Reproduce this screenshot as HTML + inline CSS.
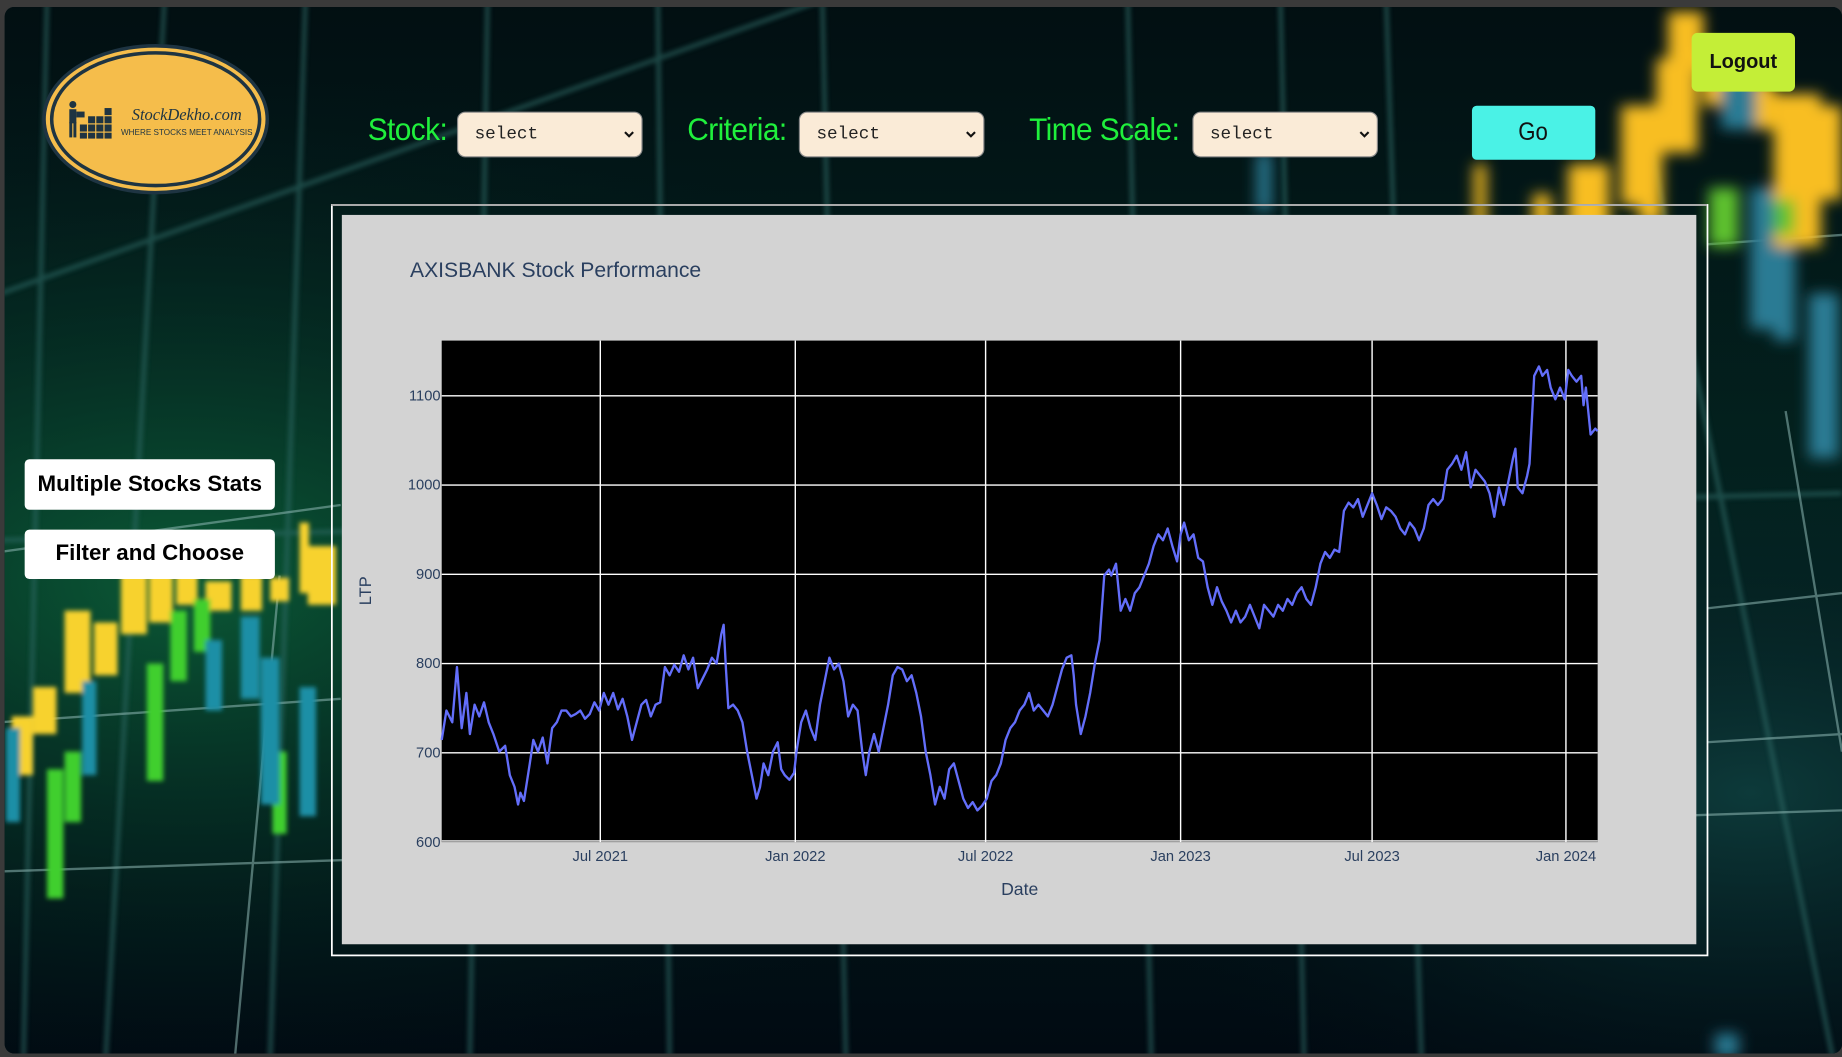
<!DOCTYPE html>
<html><head><meta charset="utf-8">
<style>
html,body{margin:0;padding:0;background:#3a3a3a;overflow:hidden;}
#w{position:absolute;left:0;top:0;width:1568px;height:900px;transform:scale(1.17474,1.17444);transform-origin:0 0;font-family:"Liberation Sans",Arial,sans-serif;}
#pg{position:absolute;left:4px;top:6px;right:0;bottom:3px;border-radius:8px;overflow:hidden;background:#02141a;}
.lbl{position:absolute;color:#1ff03c;font-family:"Liberation Sans",sans-serif;font-size:27px;top:95px;letter-spacing:-0.5px;transform:scaleX(0.94);transform-origin:0 0;}
.sel{position:absolute;top:95px;width:156px;height:37px;border:1px solid #8a8a8a;border-radius:7px;background:#faebd7;font-family:"Liberation Mono",monospace;font-size:15px;color:#222;line-height:37px;box-sizing:content-box;}
.sel span{position:absolute;left:14px;}
.sel svg{position:absolute;right:6px;top:15px;}
.btn{position:absolute;background:#fff;border-radius:4px;font-weight:bold;font-size:19px;text-align:center;color:#000;}
</style></head><body>
<div id="w">
<div id="pg">
<svg width="1568" height="900" viewBox="0 0 1568 900" style="position:absolute;left:-4px;top:-6px">
<defs>
<radialGradient id="g1" cx="0.1" cy="0.55" r="0.5"><stop offset="0" stop-color="#0b5a36"/><stop offset="1" stop-color="#02141a" stop-opacity="0"/></radialGradient>
<radialGradient id="g2" cx="0.95" cy="0.75" r="0.35"><stop offset="0" stop-color="#0d3a3a"/><stop offset="1" stop-color="#02141a" stop-opacity="0"/></radialGradient>
<linearGradient id="g0" x1="0" y1="0" x2="0" y2="1"><stop offset="0" stop-color="#020f12"/><stop offset="0.5" stop-color="#032420"/><stop offset="1" stop-color="#010a12"/></linearGradient>
<filter id="b"><feGaussianBlur stdDeviation="2"/></filter>
<filter id="b2"><feGaussianBlur stdDeviation="6"/></filter>
</defs>
<rect width="1568" height="900" fill="url(#g0)"/>
<rect width="1568" height="900" fill="url(#g1)"/>
<rect width="1568" height="900" fill="url(#g2)"/>
<g stroke="#2f6a66" stroke-width="4" opacity="0.6" filter="url(#b)">
<line x1="40" y1="0" x2="20" y2="900"/><line x1="140" y1="0" x2="90" y2="900"/><line x1="260" y1="0" x2="230" y2="900"/>
<line x1="415" y1="0" x2="400" y2="900"/><line x1="560" y1="0" x2="570" y2="900"/><line x1="700" y1="0" x2="720" y2="900"/>
<line x1="960" y1="0" x2="980" y2="900"/><line x1="1090" y1="0" x2="1110" y2="900"/><line x1="1180" y1="0" x2="1210" y2="900"/>
<line x1="1400" y1="100" x2="1560" y2="900"/>
<line x1="0" y1="250" x2="700" y2="0"/><line x1="0" y1="460" x2="1568" y2="420"/>
</g>
<g stroke="#8fb8b4" stroke-width="2" opacity="0.55">
<line x1="0" y1="470" x2="290" y2="430"/><line x1="0" y1="615" x2="290" y2="595"/><line x1="0" y1="742" x2="1568" y2="690"/>
<line x1="1453" y1="208" x2="1568" y2="200"/><line x1="1453" y1="518" x2="1568" y2="505"/><line x1="1453" y1="632" x2="1568" y2="625"/>
<line x1="238" y1="490" x2="200" y2="900"/><line x1="1520" y1="350" x2="1568" y2="640"/>
</g>
<g filter="url(#b)">
<g fill="#f7d22e"><rect x="10" y="610" width="18" height="50"/><rect x="28" y="585" width="20" height="40"/><rect x="55" y="520" width="22" height="70"/><rect x="80" y="530" width="20" height="45"/><rect x="103" y="480" width="22" height="60"/><rect x="127" y="470" width="20" height="60"/><rect x="150" y="475" width="18" height="40"/><rect x="175" y="495" width="22" height="25"/><rect x="205" y="490" width="18" height="30"/><rect x="230" y="492" width="16" height="20"/><rect x="262" y="465" width="24" height="50"/><rect x="255" y="445" width="8" height="60"/></g>
<g fill="#3fcf2f"><rect x="40" y="655" width="14" height="110"/><rect x="55" y="640" width="14" height="60"/><rect x="125" y="565" width="14" height="100"/><rect x="145" y="520" width="14" height="60"/><rect x="165" y="510" width="14" height="45"/><rect x="232" y="640" width="12" height="70"/></g>
<g fill="#1f8fa6"><rect x="175" y="545" width="14" height="60"/><rect x="205" y="525" width="16" height="70"/><rect x="222" y="560" width="16" height="125"/><rect x="255" y="585" width="14" height="110"/><rect x="5" y="620" width="12" height="80"/><rect x="70" y="580" width="12" height="80"/></g>
</g>
<g filter="url(#b2)">
<g fill="#f8be22"><rect x="1335" y="140" width="35" height="60"/><rect x="1380" y="90" width="35" height="85"/><rect x="1410" y="50" width="35" height="80"/><rect x="1450" y="40" width="35" height="50"/><rect x="1480" y="70" width="30" height="40"/><rect x="1510" y="80" width="40" height="130"/><rect x="1545" y="90" width="23" height="80"/><rect x="1420" y="10" width="30" height="50"/><rect x="1255" y="140" width="10" height="60"/><rect x="1305" y="165" width="15" height="30"/><rect x="1395" y="140" width="20" height="50"/></g>
<g fill="#5ec22f"><rect x="1455" y="160" width="25" height="50"/><rect x="1510" y="170" width="18" height="30"/></g>
<g fill="#2b7c94"><rect x="1465" y="60" width="30" height="50"/><rect x="1490" y="160" width="20" height="120"/><rect x="1510" y="210" width="18" height="80"/><rect x="1540" y="250" width="25" height="140"/><rect x="1070" y="130" width="12" height="50"/><rect x="1460" y="880" width="20" height="20"/></g>
</g>
<rect x="282.5" y="174.5" width="1171" height="639" fill="none" stroke="#fff" stroke-width="1.5"/>
<line x1="282" y1="174.5" x2="1453" y2="174.5" stroke="#aaa" stroke-width="1.5"/>
<rect x="291" y="183" width="1153" height="621" fill="#d3d3d3"/>
<text x="349" y="236" font-family="Liberation Sans,sans-serif" font-size="18" fill="#2a3f5f">AXISBANK Stock Performance</text>
<rect x="376" y="290" width="984" height="427" fill="#000"/>
<g stroke="#fff" stroke-width="1.2">
<line x1="376" y1="337" x2="1360" y2="337"/><line x1="376" y1="413" x2="1360" y2="413"/><line x1="376" y1="489" x2="1360" y2="489"/><line x1="376" y1="565" x2="1360" y2="565"/><line x1="376" y1="641" x2="1360" y2="641"/><line x1="376" y1="716" x2="1360" y2="716"/>
<line x1="511" y1="290" x2="511" y2="717"/><line x1="677" y1="290" x2="677" y2="717"/><line x1="839" y1="290" x2="839" y2="717"/><line x1="1005" y1="290" x2="1005" y2="717"/><line x1="1168" y1="290" x2="1168" y2="717"/><line x1="1333" y1="290" x2="1333" y2="717"/>
</g>
<polyline fill="none" stroke="#636efa" stroke-width="2" stroke-linejoin="round" points="376,630 380,605 385,615 389,568 393,620 397,590 400,625 404,600 408,610 412,598 416,615 420,625 425,640 430,635 434,660 438,670 441,685 443,675 446,682 451,650 454,630 458,640 462,628 466,650 470,620 474,615 478,605 482,605 486,610 490,608 494,605 498,612 502,608 506,598 510,605 514,590 518,600 522,590 526,604 530,595 534,610 538,630 542,615 546,600 550,596 554,610 558,600 562,598 566,568 570,575 574,566 578,572 582,558 586,570 590,560 594,586 598,578 602,570 606,560 610,565 614,540 616,532 618,570 620,603 624,600 628,605 632,615 636,640 640,660 644,680 647,670 650,650 654,660 658,640 662,632 665,655 668,660 672,664 676,658 678,640 682,615 686,605 690,620 694,630 698,600 702,580 706,560 710,570 714,565 718,580 722,610 726,600 730,605 734,640 737,660 740,640 744,625 748,640 752,620 756,600 760,575 764,568 768,570 772,580 776,575 780,590 784,610 788,640 792,660 796,685 800,670 804,680 808,655 812,650 816,665 820,680 824,688 828,683 832,690 836,686 840,680 844,665 848,660 852,650 856,630 860,620 864,615 868,605 872,600 876,590 880,605 884,600 888,605 892,610 896,600 900,585 904,570 908,560 912,558 914,575 916,600 920,625 924,610 928,590 932,565 936,545 940,490 944,485 946,490 950,480 954,520 958,510 962,520 966,505 970,500 974,490 978,480 982,465 986,455 990,460 994,450 998,465 1002,478 1005,455 1008,445 1012,460 1016,455 1020,475 1024,478 1028,500 1032,515 1036,500 1040,512 1044,520 1048,530 1052,520 1056,530 1060,525 1064,515 1068,525 1072,535 1076,515 1080,520 1084,525 1088,515 1092,520 1096,510 1100,515 1104,505 1108,500 1112,510 1116,515 1120,500 1124,480 1128,470 1132,475 1136,468 1140,470 1144,435 1148,428 1152,432 1156,425 1160,440 1164,430 1168,420 1172,430 1176,442 1180,432 1184,435 1188,440 1192,450 1196,455 1200,445 1204,450 1208,460 1212,450 1216,430 1220,425 1224,430 1228,425 1232,400 1236,395 1240,388 1244,400 1248,385 1252,415 1256,400 1260,405 1264,410 1268,420 1272,440 1276,415 1280,430 1284,410 1288,390 1290,382 1292,415 1296,420 1300,405 1302,395 1306,320 1310,312 1313,320 1317,315 1320,330 1324,340 1328,330 1332,340 1335,315 1338,320 1342,325 1346,320 1348,345 1350,330 1354,370 1358,365 1360,367"/>
<g font-family="Liberation Sans,sans-serif" font-size="12.5" fill="#2a3f5f">
<text x="375" y="341" text-anchor="end">1100</text><text x="375" y="417" text-anchor="end">1000</text><text x="375" y="493" text-anchor="end">900</text><text x="375" y="569" text-anchor="end">800</text><text x="375" y="645" text-anchor="end">700</text><text x="375" y="721" text-anchor="end">600</text>
<text x="511" y="733" text-anchor="middle">Jul 2021</text><text x="677" y="733" text-anchor="middle">Jan 2022</text><text x="839" y="733" text-anchor="middle">Jul 2022</text><text x="1005" y="733" text-anchor="middle">Jan 2023</text><text x="1168" y="733" text-anchor="middle">Jul 2023</text><text x="1333" y="733" text-anchor="middle">Jan 2024</text>
<text x="868" y="762" text-anchor="middle" font-size="15">Date</text>
<text transform="translate(316,503) rotate(-90)" text-anchor="middle" font-size="14">LTP</text>
</g>
<ellipse cx="132.5" cy="101.5" rx="95" ry="62.5" fill="#f5bd4b" stroke="#1e3442" stroke-width="3"/>
<ellipse cx="132.5" cy="101.5" rx="88.5" ry="56.5" fill="none" stroke="#1e3442" stroke-width="3"/>
<g fill="#1e3442">
<circle cx="62" cy="89" r="3"/><rect x="59" y="93" width="6" height="12"/><rect x="59" y="104" width="2.5" height="13"/><rect x="62.5" y="104" width="2.5" height="13"/><rect x="65" y="95" width="7" height="5"/>
<rect x="68" y="106" width="6" height="6"/><rect x="68" y="113" width="6" height="5"/><rect x="75" y="106" width="6" height="6"/><rect x="75" y="113" width="6" height="5"/><rect x="82" y="99" width="6" height="6"/><rect x="82" y="106" width="6" height="6"/><rect x="82" y="113" width="6" height="5"/><rect x="89" y="92" width="6" height="6"/><rect x="89" y="99" width="6" height="6"/><rect x="89" y="106" width="6" height="6"/><rect x="89" y="113" width="6" height="5"/><rect x="75" y="99" width="6" height="6"/>
</g>
<text x="159" y="102" text-anchor="middle" font-family="Liberation Serif,serif" font-style="italic" font-size="14" fill="#1e3442">StockDekho.com</text>
<text x="159" y="115" text-anchor="middle" font-family="Liberation Sans,sans-serif" font-size="7" fill="#1e3442" textLength="112" lengthAdjust="spacingAndGlyphs">WHERE STOCKS MEET ANALYSIS</text>
</svg>
</div>
<div class="lbl" style="left:313px">Stock:</div>
<div class="sel" style="left:389px"><span>select</span><svg width="9" height="7" viewBox="0 0 9 7"><path d="M1 1.5 L4.5 5 L8 1.5" fill="none" stroke="#111" stroke-width="1.8"/></svg></div>
<div class="lbl" style="left:585px">Criteria:</div>
<div class="sel" style="left:680px"><span>select</span><svg width="9" height="7" viewBox="0 0 9 7"><path d="M1 1.5 L4.5 5 L8 1.5" fill="none" stroke="#111" stroke-width="1.8"/></svg></div>
<div class="lbl" style="left:876px">Time Scale:</div>
<div class="sel" style="left:1015px"><span>select</span><svg width="9" height="7" viewBox="0 0 9 7"><path d="M1 1.5 L4.5 5 L8 1.5" fill="none" stroke="#111" stroke-width="1.8"/></svg></div>
<div style="position:absolute;left:1253px;top:90px;width:105px;height:46px;background:#4af2e6;border-radius:4px;text-align:center;line-height:46px;font-size:21px;color:#111;"><span style="display:inline-block;transform:scaleX(0.9)">Go</span></div>
<div style="position:absolute;left:1440px;top:28px;width:88px;height:50px;background:#c4ee37;border-radius:5px;text-align:center;line-height:50px;font-weight:bold;font-size:17px;color:#111;">Logout</div>
<div class="btn" style="left:21px;top:391px;width:213px;height:43px;line-height:43px;">Multiple Stocks Stats</div>
<div class="btn" style="left:21px;top:451px;width:213px;height:42px;line-height:42px;">Filter and Choose</div>
</div>
</body></html>
